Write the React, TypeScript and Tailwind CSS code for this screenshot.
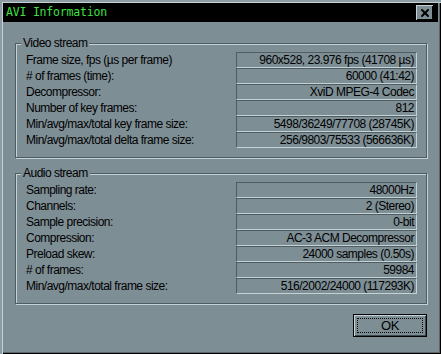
import { X } from 'lucide-react';

const videoRows: [string, string][] = [
  ['Frame size, fps (µs per frame)', '960x528, 23.976 fps (41708 µs)'],
  ['# of frames (time):', '60000 (41:42)'],
  ['Decompressor:', 'XviD MPEG-4 Codec'],
  ['Number of key frames:', '812'],
  ['Min/avg/max/total key frame size:', '5498/36249/77708 (28745K)'],
  ['Min/avg/max/total delta frame size:', '256/9803/75533 (566636K)'],
];

const audioRows: [string, string][] = [
  ['Sampling rate:', '48000Hz'],
  ['Channels:', '2 (Stereo)'],
  ['Sample precision:', '0-bit'],
  ['Compression:', 'AC-3 ACM Decompressor'],
  ['Preload skew:', '24000 samples (0.50s)'],
  ['# of frames:', '59984'],
  ['Min/avg/max/total frame size:', '516/2002/24000 (117293K)'],
];

function GroupBox({ title, rows, className }: { title: string; rows: [string, string][]; className: string }) {
  return (
    <div
      className={`relative mx-[15px] w-[412px] border border-[#4f5c62] shadow-[1px_1px_0_#c4d2d6,inset_1px_1px_0_#c4d2d6] ${className}`}
    >
      <span className="absolute left-[5px] top-[-8px] bg-[#7e8e95] px-[2px] leading-[14px] text-black">
        {title}
      </span>
      <div className="flex flex-col">
        {rows.map(([label, value]) => (
          <div key={label} className="flex h-[16px] items-center">
            <div className="w-[220px] pl-[10px] leading-[16px] text-black">{label}</div>
            <div className="h-[16px] w-[181px] border-t border-l border-[#4f5c62] border-b border-r border-b-[#c4d2d6] border-r-[#c4d2d6] pr-[2px] text-right leading-[14px] text-black">
              {value}
            </div>
          </div>
        ))}
      </div>
    </div>
  );
}

export default function App() {
  return (
    <div
      className="flex h-[354px] w-[441px] flex-col bg-[#7e8e95] text-[12px] tracking-[-0.5px] shadow-[inset_2px_2px_0_#8c9ca2,inset_3px_3px_0_#c4d2d6,inset_-1px_-1px_0_#000,inset_-2px_-2px_0_#5a676c]"
      style={{ fontFamily: '"Liberation Sans", Arial, sans-serif' }}
    >
      <div className="mx-[3px] mt-[3px] flex h-[19px] items-center justify-between bg-black pl-[3px] pr-[5px]">
        <span
          className="text-[11.5px] tracking-[-0.2px] text-[#3ee043]"
          style={{ fontFamily: '"DejaVu Sans Mono", monospace' }}
        >
          AVI Information
        </span>
        <button className="flex h-[15px] w-[17px] items-center justify-center bg-[#7e8e95] shadow-[inset_1px_1px_0_#c4d2d6,inset_-1px_-1px_0_#000]">
          <X size={12} strokeWidth={4} className="text-black" />
        </button>
      </div>

      <GroupBox title="Video stream" rows={videoRows} className="mt-[21px] pt-[8px] pb-[9px]" />
      <GroupBox title="Audio stream" rows={audioRows} className="mt-[15px] pt-[8px] pb-[9px]" />

      <div className="flex justify-end pr-[14px] pt-[10px]">
        <button className="flex h-[23px] w-[74px] items-center justify-center border border-black bg-[#7e8e95] p-[3px] shadow-[inset_1px_1px_0_#c4d2d6,inset_-1px_-1px_0_#3e4a4f]">
          <span className="flex h-full w-full items-center justify-center border border-dotted border-black text-[13px] leading-none text-black">
            OK
          </span>
        </button>
      </div>
    </div>
  );
}
